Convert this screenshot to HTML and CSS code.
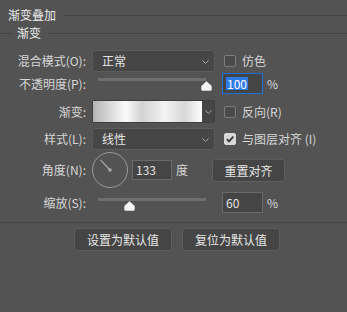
FILE: index.html
```html
<!DOCTYPE html>
<html lang="zh-CN">
<head>
    <meta charset="UTF-8">
    <meta name="viewport" content="width=device-width, initial-scale=1.0">
    <title>渐变叠加</title>
    <link rel="stylesheet" href="styles.css">
</head>
<body>
    <div class="panel">
        <div class="group-title">
            <span>渐变叠加</span>
            <span class="rule"></span>
        </div>

        <div class="section-title">
            <span class="rule rule-short"></span>
            <span>渐变</span>
            <span class="rule"></span>
        </div>

        <div class="row row-blend">
            <span class="label">混合模式(<u>O</u>):</span>
            <div class="select">
                <span>正常</span>
                <svg class="chevron" width="7" height="4" viewBox="0 0 7 4"><path d="M0.5 0.5 L3.5 3.5 L6.5 0.5"/></svg>
            </div>
            <span class="checkbox"></span>
            <span class="check-label">仿色</span>
        </div>

        <div class="row row-opacity">
            <span class="label">不透明度(<u>P</u>):</span>
            <div class="slider">
                <div class="track">
                    <svg class="thumb" style="left: 100%" width="11" height="10" viewBox="0 0 11 10"><path d="M5.5 0.3 L10.7 5 V8.6 Q10.7 9.7 9.6 9.7 H1.4 Q0.3 9.7 0.3 8.6 V5 Z"/></svg>
                </div>
            </div>
            <div class="field field-active"><span class="selected">100</span></div>
            <span class="unit">%</span>
        </div>

        <div class="row row-gradient">
            <span class="label">渐变:</span>
            <div class="gradient-picker">
                <div class="gradient-swatch"></div>
                <div class="gradient-arrow">
                    <svg class="chevron" width="7" height="4" viewBox="0 0 7 4"><path d="M0.5 0.5 L3.5 3.5 L6.5 0.5"/></svg>
                </div>
            </div>
            <span class="checkbox"></span>
            <span class="check-label">反向(<u>R</u>)</span>
        </div>

        <div class="row row-style">
            <span class="label">样式(<u>L</u>):</span>
            <div class="select">
                <span>线性</span>
                <svg class="chevron" width="7" height="4" viewBox="0 0 7 4"><path d="M0.5 0.5 L3.5 3.5 L6.5 0.5"/></svg>
            </div>
            <span class="checkbox checked">
                <svg width="10" height="10" viewBox="0 0 10 10"><path d="M1.8 5.2 L4 7.4 L8.3 2.6"/></svg>
            </span>
            <span class="check-label">与图层对齐 (<u>I</u>)</span>
        </div>

        <div class="row row-angle">
            <span class="label">角度(<u>N</u>):</span>
            <svg class="dial" width="36" height="36" viewBox="0 0 36 36">
                <circle cx="18" cy="18" r="17.5"/>
                <line x1="18" y1="18" x2="8.4" y2="7.8"/>
                <circle class="dial-dot" cx="18" cy="18" r="1.8"/>
            </svg>
            <div class="field field-angle">133</div>
            <span class="unit">度</span>
            <button class="btn btn-align">重置对齐</button>
        </div>

        <div class="row row-scale">
            <span class="label">缩放(<u>S</u>):</span>
            <div class="slider">
                <div class="track">
                    <svg class="thumb" style="left: 29.6%" width="11" height="10" viewBox="0 0 11 10"><path d="M5.5 0.3 L10.7 5 V8.6 Q10.7 9.7 9.6 9.7 H1.4 Q0.3 9.7 0.3 8.6 V5 Z"/></svg>
                </div>
            </div>
            <div class="field">60</div>
            <span class="unit">%</span>
        </div>

        <div class="divider"></div>

        <div class="actions">
            <button class="btn btn-default">设置为默认值</button>
            <button class="btn btn-default">复位为默认值</button>
        </div>
    </div>
</body>
</html>
```

FILE: styles.css
```css
/* Painel "Gradient Overlay" */
* {
    box-sizing: border-box;
}

body {
    margin: 0;
    background: #535353;
    font-family: "Noto Sans CJK SC", "Noto Sans", sans-serif;
    font-size: 12px;
    color: #d6d6d6;
}

u {
    text-decoration: none;
}

.panel {
    width: 347px;
    height: 312px;
    padding-top: 8px;
}

.group-title,
.section-title {
    display: flex;
    align-items: center;
    height: 14px;
    line-height: 14px;
    color: #ebebeb;
}

.group-title {
    padding-left: 8px;
}

.group-title .rule {
    margin-left: 8px;
}

.section-title {
    margin-top: 4px;
}

.section-title .rule {
    margin-left: 7px;
}

.section-title .rule-short {
    flex: none;
    width: 12px;
    margin: 0 5px 0 0;
}

.rule {
    flex: 1;
    height: 1px;
    background: #454545;
}

.row {
    display: flex;
    align-items: center;
    line-height: 14px;
}

.row-blend   { height: 22px; margin-top: 10px; }
.row-opacity { height: 21px; margin-top: 1px; }
.row-gradient { height: 23px; margin-top: 6px; }
.row-style   { height: 22px; margin-top: 5px; }
.row-angle   { height: 36px; margin-top: 2px; }
.row-scale   { height: 21px; margin-top: 4px; }

.label {
    width: 86px;
    margin-right: 6px;
    text-align: right;
    white-space: nowrap;
}

.select {
    position: relative;
    display: flex;
    align-items: center;
    width: 123px;
    height: 22px;
    padding-left: 9px;
    background: #464646;
    border: 1px solid #5c5c5c;
    border-radius: 3px;
    color: #e4e4e4;
}

.select .chevron {
    position: absolute;
    right: 5px;
    top: 9px;
}

.chevron path {
    fill: none;
    stroke: #a8a8a8;
    stroke-width: 1;
}

.checkbox {
    display: flex;
    align-items: center;
    justify-content: center;
    width: 12px;
    height: 12px;
    margin-left: 9px;
    background: #4a4a4a;
    border: 1px solid #7e7e7e;
    border-radius: 2px;
}

.checkbox.checked {
    background: #d8d8d8;
    border-color: #d8d8d8;
}

.checkbox.checked path {
    fill: none;
    stroke: #3a3a3a;
    stroke-width: 1.8;
}

.check-label {
    margin-left: 6px;
    white-space: nowrap;
}

.slider {
    width: 123px;
    height: 100%;
    padding: 0 9px 0 6px;
}

.track {
    position: relative;
    height: 3px;
    margin-top: 5px;
    background: #6e6e6e;
}

.row-scale .track {
    margin-top: 6px;
}

.thumb {
    position: absolute;
    top: 3px;
    margin-left: -5.5px;
}

.thumb path {
    fill: #f4f4f4;
}

.field {
    width: 41px;
    height: 21px;
    margin-left: 7px;
    padding-left: 3px;
    line-height: 19px;
    background: #454545;
    border: 1px solid #6a6a6a;
    color: #e2e2e2;
}

.field-active {
    border-color: #1f6fdc;
}

.selected {
    display: inline-block;
    line-height: 13px;
    padding: 0 1px;
    background: #2e7be6;
    color: #fff;
}

.unit {
    margin-left: 4px;
}

.gradient-picker {
    display: flex;
    width: 123px;
    height: 23px;
    border: 1px solid #3e3e3e;
    border-radius: 2px;
}

.gradient-swatch {
    flex: 1;
    background: linear-gradient(90deg, #b4b4b4 0%, #fbfbfb 30%, #d2d2d2 45%, #f4f4f4 66%, #d6d6d6 84%, #ffffff 100%);
}

.gradient-arrow {
    display: flex;
    align-items: center;
    justify-content: center;
    width: 12px;
    background: #454545;
}

.dial circle {
    fill: none;
    stroke: #9a9a9a;
    stroke-width: 1;
}

.dial line {
    stroke: #a8a8a8;
    stroke-width: 1.2;
}

.dial .dial-dot {
    fill: #a8a8a8;
    stroke: none;
}

.field-angle {
    width: 40px;
    height: 20px;
    margin-left: 4px;
    line-height: 18px;
}

.btn {
    height: 23px;
    padding: 0;
    font-family: inherit;
    font-size: 12px;
    color: #e6e6e6;
    background: #454545;
    border: 1px solid #5e5e5e;
    border-radius: 3px;
}

.btn-align {
    width: 73px;
    margin-left: 24px;
}

.divider {
    height: 1px;
    margin-top: 9px;
    background: #464646;
}

.actions {
    display: flex;
    gap: 10px;
    margin-top: 5px;
    padding-left: 74px;
}

.btn-default {
    width: 98px;
}
```
